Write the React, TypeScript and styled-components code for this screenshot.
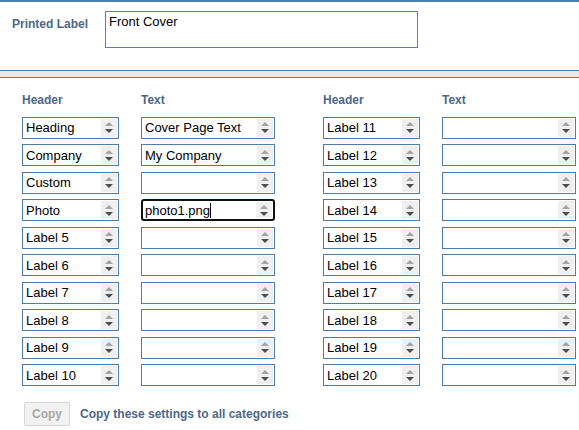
import React from "react";
import styled, { createGlobalStyle } from "styled-components";

const GlobalStyle = createGlobalStyle`
  body {
    margin: 0;
    background: #fff;
    font-family: "Liberation Sans", Arial, sans-serif;
  }
`;

const Page = styled.div`
  width: 579px;
  height: 430px;
  border-top: 2px solid #4a7eab;
  box-sizing: border-box;
  overflow: hidden;
`;

const TopSection = styled.div`
  display: flex;
  align-items: flex-start;
  padding: 9px 0 0 12px;
  height: 59px;
`;

const FieldLabel = styled.div`
  width: 93px;
  padding-top: 6px;
  font-size: 12px;
  font-weight: bold;
  color: #4d6888;
`;

const LabelBox = styled.div`
  width: 305px;
  height: 31px;
  border: 1px solid #5a83aa;
  padding: 2px 3px;
  font-size: 13px;
  color: #000;
`;

const Separator = styled.div`
  height: 6px;
  background: #ebebeb;
  border-top: 1px solid #4a7eab;
  border-bottom: 1px solid #4a7eab;
`;

const Fields = styled.div`
  display: flex;
  gap: 48px;
  padding: 15px 0 0 22px;
`;

const Group = styled.div`
  display: grid;
  grid-template-columns: 97px 134px;
  column-gap: 22px;
  row-gap: 5.5px;
  align-content: start;
`;

const ColHead = styled.div`
  font-size: 12px;
  font-weight: bold;
  color: #4d6888;
  height: 18px;
`;

const Box = styled.div<{ $focused?: boolean }>`
  display: flex;
  height: 22px;
  box-sizing: border-box;
  border: ${(p) => (p.$focused ? "2px solid #111" : "1px solid #4f7ca6")};
  border-radius: ${(p) => (p.$focused ? "3px" : "0")};
  background: #fff;
  overflow: hidden;
`;

const BoxText = styled.div<{ $focused?: boolean }>`
  flex: 1;
  display: flex;
  align-items: center;
  padding-left: ${(p) => (p.$focused ? "2px" : "3px")};
  font-size: 13px;
  color: #000;
  white-space: nowrap;
`;

const Caret = styled.span`
  display: inline-block;
  width: 1px;
  height: 15px;
  background: #000;
`;

const Spinner = styled.div<{ $focused?: boolean }>`
  width: 16px;
  margin: ${(p) => (p.$focused ? "1px 1px 1px 0" : "1px")};
  background: #efefef;
  display: flex;
  flex-direction: column;
  align-items: center;
  justify-content: center;
  gap: 3px;
`;

const Arrow = styled.div<{ $down?: boolean }>`
  width: 0;
  height: 0;
  border-left: 4px solid transparent;
  border-right: 4px solid transparent;
  ${(p) =>
    p.$down
      ? "border-top: 4px solid #4d4d4d;"
      : "border-bottom: 4px solid #a3a3a3;"}
`;

const Footer = styled.div`
  display: flex;
  align-items: center;
  gap: 10px;
  padding: 16px 0 0 24px;
`;

const CopyButton = styled.button`
  width: 46px;
  height: 24px;
  border: 1px solid #d6d6d6;
  border-radius: 2px;
  background: #f2f2f2;
  color: #a9a9a9;
  font-family: "Liberation Sans", Arial, sans-serif;
  font-size: 12px;
  font-weight: bold;
  padding: 0;
`;

const FooterText = styled.span`
  font-size: 12px;
  font-weight: bold;
  color: #4d6888;
`;

type FieldProps = { value?: string; focused?: boolean };

const Field: React.FC<FieldProps> = ({ value, focused }) => (
  <Box $focused={focused}>
    <BoxText $focused={focused}>
      {value}
      {focused && <Caret />}
    </BoxText>
    <Spinner $focused={focused}>
      <Arrow />
      <Arrow $down />
    </Spinner>
  </Box>
);

const leftRows: [string, string][] = [
  ["Heading", "Cover Page Text"],
  ["Company", "My Company"],
  ["Custom", ""],
  ["Photo", "photo1.png"],
  ["Label 5", ""],
  ["Label 6", ""],
  ["Label 7", ""],
  ["Label 8", ""],
  ["Label 9", ""],
  ["Label 10", ""],
];

const rightRows: [string, string][] = Array.from({ length: 10 }, (_, i) => [
  `Label ${i + 11}`,
  "",
]);

const App: React.FC = () => (
  <>
    <GlobalStyle />
    <Page>
      <TopSection>
        <FieldLabel>Printed Label</FieldLabel>
        <LabelBox>Front Cover</LabelBox>
      </TopSection>
      <Separator />
      <Fields>
        <Group>
          <ColHead>Header</ColHead>
          <ColHead>Text</ColHead>
          {leftRows.map(([h, t]) => (
            <React.Fragment key={h}>
              <Field value={h} />
              <Field value={t} focused={h === "Photo"} />
            </React.Fragment>
          ))}
        </Group>
        <Group>
          <ColHead>Header</ColHead>
          <ColHead>Text</ColHead>
          {rightRows.map(([h, t]) => (
            <React.Fragment key={h}>
              <Field value={h} />
              <Field value={t} />
            </React.Fragment>
          ))}
        </Group>
      </Fields>
      <Footer>
        <CopyButton>Copy</CopyButton>
        <FooterText>Copy these settings to all categories</FooterText>
      </Footer>
    </Page>
  </>
);

export default App;
